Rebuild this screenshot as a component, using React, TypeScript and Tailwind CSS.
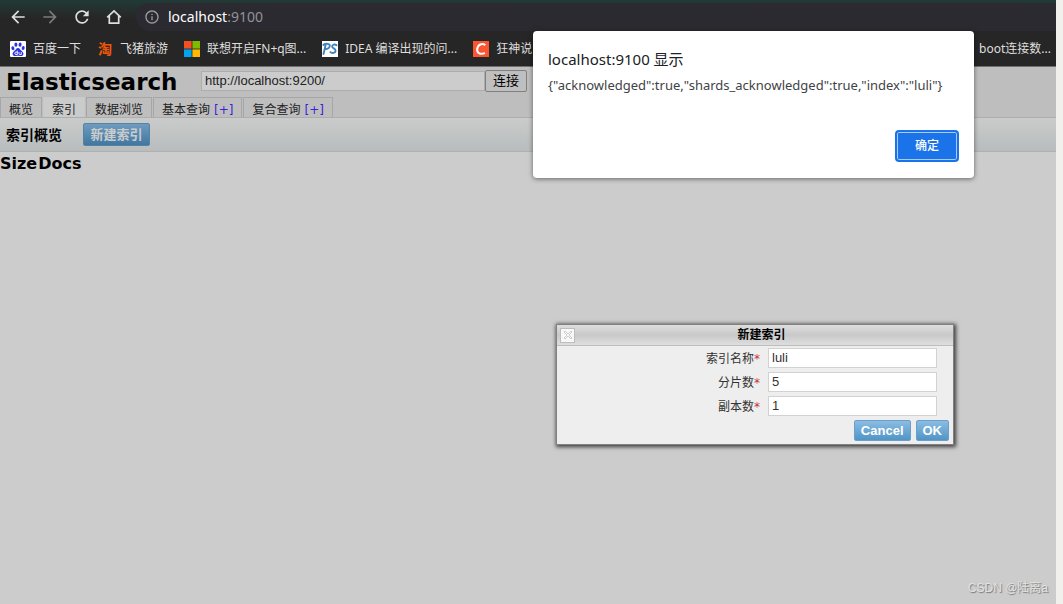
import { useState } from 'react';
import type { ReactNode } from 'react';
import clsx from 'clsx';
import { MdArrowBack, MdArrowForward, MdRefresh, MdInfoOutline } from 'react-icons/md';

interface Bookmark {
  label: string;
  icon: ReactNode;
}

interface Tab {
  id: string;
  label: string;
  plus?: boolean;
}

interface Field {
  id: string;
  label: string;
  value: string;
}

const HomeIcon = () => (
  <svg viewBox="0 0 20 20" className="size-5" fill="none" stroke="currentColor" strokeWidth="1.7">
    <path d="M3.200 10.300L10 4l6.800 6.300M5.300 9v7.200h9.400V9" />
  </svg>
);

const BaiduIcon = () => (
  <svg viewBox="0 0 16 16" className="size-4 shrink-0">
    <rect width="16" height="16" rx="1" fill="#fff" />
    <g fill="#2d34dc">
      <ellipse cx="2.9" cy="7.2" rx="1.5" ry="2" transform="rotate(-12 2.9 7.2)" />
      <ellipse cx="5.9" cy="3.7" rx="1.5" ry="2.1" />
      <ellipse cx="10.1" cy="3.7" rx="1.5" ry="2.1" transform="rotate(8 10.1 3.7)" />
      <ellipse cx="13.2" cy="7" rx="1.5" ry="2" transform="rotate(12 13.2 7)" />
      <path d="M8 6.9c1.5 0 2 1.4 3.1 2.5 1.2 1.1 2.7 2 2.3 3.9-.4 1.8-2.1 2-3.5 1.7-1.3-.3-2.5-.3-3.8 0-1.4.3-3.1.1-3.5-1.7-.4-1.9 1.1-2.8 2.3-3.9C6 8.300 6.500 6.900 8 6.900z" />
    </g>
    <path d="M7.3 9.700v3.800H6a1.200 1.200 0 0 1 0-2.400h1.300M9 11v1.600c0 .6.3.9.9.9h1.400V11" fill="none" stroke="#fff" strokeWidth="0.9" />
  </svg>
);

const WindowsIcon = () => (
  <svg viewBox="0 0 16 16" className="size-4 shrink-0">
    <path fill="#f25022" d="M0 0h7.600v7.600H0z" />
    <path fill="#7fba00" d="M8.400 0H16v7.600H8.400z" />
    <path fill="#00a4ef" d="M0 8.400h7.600V16H0z" />
    <path fill="#ffb900" d="M8.400 8.400H16V16H8.400z" />
  </svg>
);

const PsIcon = () => (
  <svg viewBox="0 0 16 16" className="size-4 shrink-0">
    <rect width="16" height="16" fill="#fff" />
    <g fill="none" stroke="#3f83bd" strokeWidth="1.9" strokeLinecap="round" strokeLinejoin="round">
      <path d="M1.500 13L3.700 3.600M1.400 3.900c2-1.400 6.300-1.700 6.400.7.100 2.400-2.300 3.600-4.700 3.600" />
      <path d="M14.600 4.200c-1.800-1.300-4.400-.7-4.500 1.200-.1 2 3.700 2.100 3.500 4.400-.2 2.400-3.600 2.800-5.200 1.300" />
    </g>
  </svg>
);

const CsdnIcon = () => (
  <svg viewBox="0 0 16 16" className="size-4 shrink-0">
    <rect width="16" height="16" fill="#fc5531" />
    <path d="M12.300 4.100C9.300 2 4.900 3.400 4.200 7.900c-.7 4.300 3.600 6.100 7.700 3.900" fill="none" stroke="#fff" strokeWidth="2" />
  </svg>
);

const bookmarks: Bookmark[] = [
  { label: '百度一下', icon: <BaiduIcon /> },
  { label: '飞猪旅游', icon: <span className="w-4 text-center text-sm font-bold text-[#f0560a]">淘</span> },
  { label: '联想开启FN+q图...', icon: <WindowsIcon /> },
  { label: 'IDEA 编译出现的问...', icon: <PsIcon /> },
  { label: '狂神说', icon: <CsdnIcon /> },
];

const tabs: Tab[] = [
  { id: 'overview', label: '概览' },
  { id: 'indices', label: '索引' },
  { id: 'browser', label: '数据浏览' },
  { id: 'basic', label: '基本查询', plus: true },
  { id: 'compound', label: '复合查询', plus: true },
];

const fields: Field[] = [
  { id: 'name', label: '索引名称', value: 'luli' },
  { id: 'shards', label: '分片数', value: '5' },
  { id: 'replicas', label: '副本数', value: '1' },
];

function BrowserBar() {
  return (
    <header className="bg-[#262626] font-['Noto_Sans','Noto_Sans_CJK_SC',sans-serif] text-[#dedede]">
      <div className="flex h-[31px] items-end bg-linear-to-b from-[#203a36] to-[#262626] to-60%">
        <nav className="flex h-7 w-[136px] shrink-0 items-center gap-3 pl-2">
          <button type="button" aria-label="后退"><MdArrowBack size={20} /></button>
          <button type="button" aria-label="前进" className="text-[#7b7b7b]"><MdArrowForward size={20} /></button>
          <button type="button" aria-label="刷新"><MdRefresh size={20} /></button>
          <button type="button" aria-label="主页"><HomeIcon /></button>
        </nav>
        <div className="flex h-7 flex-1 items-center gap-2 rounded-l-full bg-[#2b2a30] pl-2">
          <MdInfoOutline size={16} className="text-[#9c9c9f]" />
          <span className="text-sm text-[#929296]">
            <span className="text-white">localhost</span>:9100
          </span>
        </div>
      </div>
      <div className="flex h-9 items-center gap-4 border-b border-[#6f6f6f] pl-[10px] pr-[5px] text-xs">
        {bookmarks.map((b) => (
          <a key={b.label} href="#" className="flex items-center gap-[7px] whitespace-nowrap">
            {b.icon}
            {b.label}
          </a>
        ))}
        <a href="#" className="ml-auto whitespace-nowrap">boot连接数...</a>
      </div>
    </header>
  );
}

function Alert() {
  return (
    <div
      role="alertdialog"
      aria-labelledby="alert-title"
      className="absolute left-[533px] top-[31px] flex h-[147px] w-[441px] flex-col rounded bg-white px-[15px] pb-4 pt-4 font-['Noto_Sans','Noto_Sans_CJK_SC',sans-serif] shadow-[0_1px_5px_rgba(0,0,0,0.5)]"
    >
      <h2 id="alert-title" className="text-[15px] leading-6 text-[#202124]">localhost:9100 显示</h2>
      <p className="whitespace-nowrap text-[13px] leading-7 text-[#404346]">
        {'{"acknowledged":true,"shards_acknowledged":true,"index":"luli"}'}
      </p>
      <button
        type="button"
        className="mt-auto h-8 w-16 self-end rounded border-2 border-[#1a73e8] bg-[#1a73e8] text-xs font-medium text-white inset-ring inset-ring-[#a9cbf7]"
      >
        确定
      </button>
    </div>
  );
}

const blueButton =
  "h-[21px] rounded-xs border border-[#6a9fcb] bg-linear-to-b from-[#8abce3] to-[#5095c6] px-1.5 font-['Liberation_Sans',sans-serif] text-[13px] font-bold text-white";

function CreateIndexDialog() {
  const [values, setValues] = useState(fields.map((f) => f.value));

  return (
    <form
      onSubmit={(e) => e.preventDefault()}
      className="absolute left-[556px] top-[324px] w-[398px] border border-[#808080] bg-[#eeeeee] shadow-[1px_1px_4px_1px_rgba(0,0,0,0.7)]"
    >
      <div className="flex h-[21px] items-center border-b border-[#bdbdbd] bg-linear-to-b from-[#dedede] via-[#c9c9c9] to-[#dedede] px-[3px]">
        <button type="button" aria-label="关闭" className="flex size-[15px] items-center justify-center border border-[#bdbdbd] bg-[#f8f8f8]">
          <svg viewBox="0 0 10 10" className="size-[10px]" fill="none" stroke="#cfcfcf">
            <path d="M1 2l1-1 3 3 3-3 1 1-3 3 3 3-1 1-3-3-3 3-1-1 3-3z" />
          </svg>
        </button>
        <h2 className="flex-1 pr-[2px] text-center text-xs font-bold text-black">新建索引</h2>
      </div>
      <div className="flex flex-col gap-1 pr-4 pt-[2px]">
        {fields.map((f, i) => (
          <div key={f.id} className="flex items-center justify-end gap-2">
            <label htmlFor={f.id} className="pt-[2px] text-xs text-[#333]">
              {f.label}<span className="text-[#cc3333]">*</span>
            </label>
            <input
              id={f.id}
              value={values[i]}
              onChange={(e) => setValues(values.map((v, n) => (n === i ? e.target.value : v)))}
              className="h-5 w-[169px] border border-[#d2d2d2] bg-white px-[3px] pb-[2px] font-['Liberation_Sans',sans-serif] text-[13px] text-[#333]"
            />
          </div>
        ))}
      </div>
      <div className="flex justify-end gap-[5px] px-1 pb-[3px] pt-1">
        <button type="button" className={blueButton}>Cancel</button>
        <button type="submit" className={blueButton}>OK</button>
      </div>
    </form>
  );
}

export default function App() {
  const [active, setActive] = useState('indices');
  const [url, setUrl] = useState('http://localhost:9200/');

  return (
    <div className="relative flex min-h-screen overflow-hidden bg-[#f1f0ec] pr-[7px] font-['DejaVu_Sans','Noto_Sans_CJK_SC',sans-serif]">
      <div className="flex min-w-0 flex-1 flex-col bg-[#cccccc]">
        <BrowserBar />

        <div className="border-b border-[#adadad] bg-[#bebebe]">
          <div className="flex h-[30px] items-center">
            <h1 className="w-[201px] pl-[6px] text-[23px] font-bold leading-7 text-black">Elasticsearch</h1>
            <input
              aria-label="Elasticsearch URL"
              value={url}
              onChange={(e) => setUrl(e.target.value)}
              className="mb-[2px] h-5 w-[284px] border border-[#adadad] bg-[#cccccc] px-[3px] pb-[2px] font-['Liberation_Sans',sans-serif] text-[13px] text-[#222]"
            />
            <button type="button" className="mb-[2px] h-[22px] w-[42px] rounded-xs border border-[#808080] bg-[#bfbfbf] text-[13px] text-black">
              连接
            </button>
          </div>
          <nav className="flex h-5 gap-px">
            {tabs.map((tab) => (
              <button
                key={tab.id}
                type="button"
                onClick={() => setActive(tab.id)}
                className={clsx(
                  'flex items-center gap-1 border border-b-0 px-2 pt-[5px] text-xs text-[#222]',
                  active === tab.id ? 'border-[#c8c8c8] bg-[#cacccc]' : 'border-[#a6a6a6] bg-[#bebebe]',
                )}
              >
                {tab.label}
                {tab.plus && <span className="text-[#3a1fdb]">[+]</span>}
              </button>
            ))}
          </nav>
        </div>

        <div className="flex h-[34px] items-center gap-[21px] border-b border-[#acb1b1] bg-linear-to-b from-[#cacccb] to-[#b8bcbd] pl-[6px]">
          <h2 className="text-sm font-bold text-black">索引概览</h2>
          <button type="button" className="h-[23px] w-[67px] rounded-xs border border-[#5682a3] bg-linear-to-b from-[#6e9bc0] to-[#41779f] text-[13px] font-bold text-[#cccccc]">
            新建索引
          </button>
        </div>

        <table className="self-start text-left text-base text-black">
          <thead>
            <tr>
              <th className="pr-px">Size</th>
              <th>Docs</th>
            </tr>
          </thead>
        </table>
      </div>

      <Alert />
      <CreateIndexDialog />

      <span className="absolute bottom-2 right-[15px] font-['Liberation_Sans','Noto_Sans_CJK_SC',sans-serif] text-xs text-[#e2e2e2] [text-shadow:1px_1px_1px_#777]">
        CSDN @陆离a
      </span>
    </div>
  );
}
